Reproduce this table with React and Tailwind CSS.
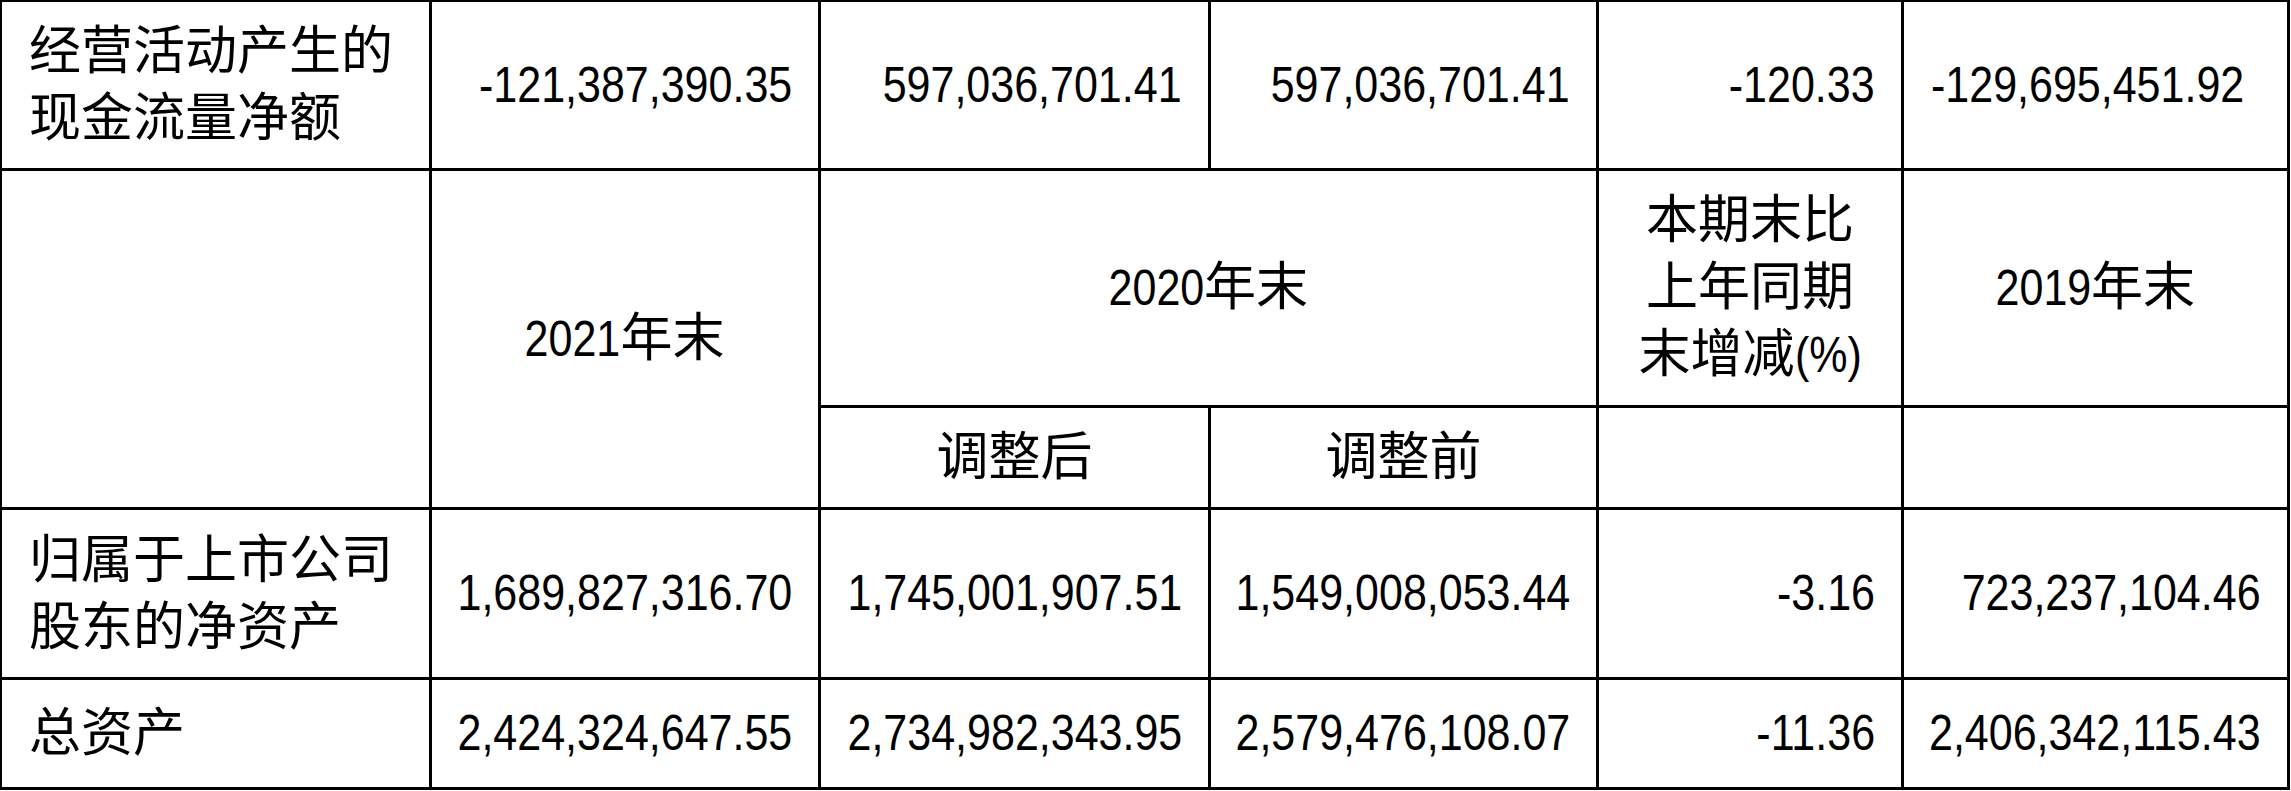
import React from "react";

const FONT = {
  fontFamily: '"Liberation Sans", "Noto Sans CJK SC", sans-serif',
};

function Cell({ className = "", children }) {
  return <div className={"bg-white flex items-center " + className}>{children}</div>;
}

function D({ children, className = "" }) {
  return (
    <span className={"inline-block origin-right scale-x-[0.86] text-[50px] " + className}>
      {children}
    </span>
  );
}

function Num({ children, className = "" }) {
  return (
    <Cell className={"justify-end pr-[26px] " + className}>
      <span className="whitespace-nowrap inline-block origin-right scale-x-[0.86] text-[50px]">
        {children}
      </span>
    </Cell>
  );
}

function Label({ children }) {
  return (
    <Cell className="justify-start pl-[27px]">
      <div className="leading-[67px] whitespace-nowrap">{children}</div>
    </Cell>
  );
}

function Center({ children, className = "" }) {
  return (
    <Cell className={"justify-center text-center " + className}>
      <div className="leading-[67px] whitespace-nowrap">{children}</div>
    </Cell>
  );
}

export default function App() {
  return (
    <div className="w-[2291px] h-[791px] bg-white text-black" style={FONT}>
      <div className="w-[2290px] h-[790px] bg-black pt-[2px] pl-[2px] pr-[3px] pb-[3px] grid gap-[3px] grid-cols-[427px_386px_387px_385px_302px_383px] grid-rows-[166px_234px_99px_167px_107px] text-[52px]">
        {/* Row 1 */}
        <Label>
          经营活动产生的
          <br />
          现金流量净额
        </Label>
        <Num>-121,387,390.35</Num>
        <Num>597,036,701.41</Num>
        <Num>597,036,701.41</Num>
        <Num>-120.33</Num>
        <Num className="pr-[43px]">-129,695,451.92</Num>

        {/* Header rows */}
        <Cell className="row-span-2" />
        <Center className="row-span-2">
          <D className="ml-[-16px]">2021</D>年末
        </Center>
        <Center className="col-span-2">
          <D className="ml-[-16px]">2020</D>年末
        </Center>
        <Center>
          本期末比
          <br />
          上年同期
          <br />
          末增减<D className="ml-[-11px]">(%)</D>
        </Center>
        <Center>
          <D className="ml-[-16px]">2019</D>年末
        </Center>
        <Center>调整后</Center>
        <Center>调整前</Center>
        <Cell />
        <Cell />

        {/* Row 3 */}
        <Label>
          归属于上市公司
          <br />
          股东的净资产
        </Label>
        <Num>1,689,827,316.70</Num>
        <Num>1,745,001,907.51</Num>
        <Num>1,549,008,053.44</Num>
        <Num>-3.16</Num>
        <Num>723,237,104.46</Num>

        {/* Row 4 */}
        <Label>总资产</Label>
        <Num>2,424,324,647.55</Num>
        <Num>2,734,982,343.95</Num>
        <Num>2,579,476,108.07</Num>
        <Num>-11.36</Num>
        <Num>2,406,342,115.43</Num>
      </div>
    </div>
  );
}
